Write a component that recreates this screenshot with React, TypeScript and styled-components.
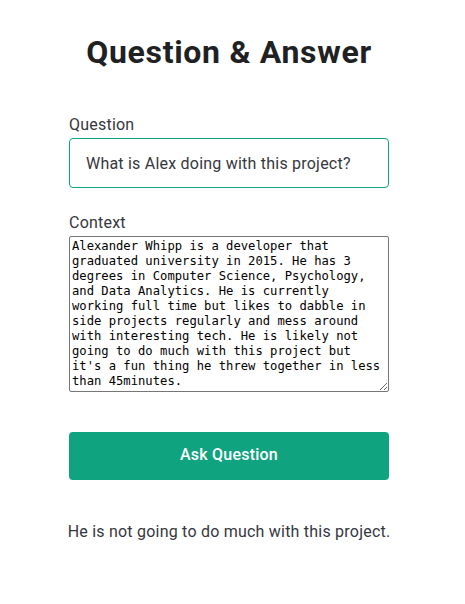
import React from "react";
import styled, { createGlobalStyle } from "styled-components";

const Global = createGlobalStyle`
  html, body { margin: 0; padding: 0; background: #fff; }
  body {
    font-family: Roboto, "Noto Sans", sans-serif;
    font-size: 16px;
    line-height: 24px;
    letter-spacing: 0.22px;
    color: #353740;
  }
`;

const Main = styled.main`
  display: flex;
  flex-direction: column;
  align-items: center;
  padding: 32px 7px 0 0;
`;

const Title = styled.h3`
  margin: 0 0 40px;
  font-size: 32px;
  line-height: 40px;
  font-weight: 700;
  letter-spacing: 0.7px;
  color: #202123;
`;

const Form = styled.form`
  display: flex;
  flex-direction: column;
  width: 320px;
`;

const Label = styled.label`
  display: block;
  padding-top: 1px;
  margin-bottom: 1px;
  color: #353740;
`;

const TextInput = styled.input`
  box-sizing: border-box;
  height: 50px;
  padding: 12px 16px;
  border: 1px solid #10a37f;
  border-radius: 4px;
  margin-bottom: 22px;
  font: inherit;
  letter-spacing: inherit;
  color: #353740;
  outline: none;
`;

const Area = styled.textarea`
  box-sizing: border-box;
  width: 320px;
  height: 156px;
  padding: 2px;
  margin: 0 0 40px;
  border: 1px solid #767676;
  border-radius: 2px;
  font-family: "DejaVu Sans Mono", monospace;
  font-size: 12.2px;
  line-height: 15px;
  letter-spacing: 0;
  color: #000;
  resize: vertical;
  overflow: hidden;
`;

const Submit = styled.button`
  height: 48px;
  padding: 11px 0 13px;
  border: none;
  border-radius: 4px;
  background: #10a37f;
  color: #fff;
  font: inherit;
  font-weight: 500;
  letter-spacing: inherit;
  cursor: pointer;
`;

const Result = styled.div`
  margin-top: 40px;
  text-align: center;
  white-space: nowrap;
`;

const context =
  "Alexander Whipp is a developer that graduated university in 2015. He has 3 degrees in Computer Science, Psychology, and Data Analytics. He is currently working full time but likes to dabble in side projects regularly and mess around with interesting tech. He is likely not going to do much with this project but it's a fun thing he threw together in less than 45minutes.";

export default function App() {
  return (
    <>
      <Global />
      <Main>
        <Title>Question &amp; Answer</Title>
        <Form onSubmit={(e) => e.preventDefault()}>
          <Label htmlFor="q">Question</Label>
          <TextInput id="q" type="text" defaultValue="What is Alex doing with this project?" />
          <Label htmlFor="c">Context</Label>
          <Area id="c" defaultValue={context} />
          <Submit type="submit">Ask Question</Submit>
        </Form>
        <Result>He is not going to do much with this project.</Result>
      </Main>
    </>
  );
}
